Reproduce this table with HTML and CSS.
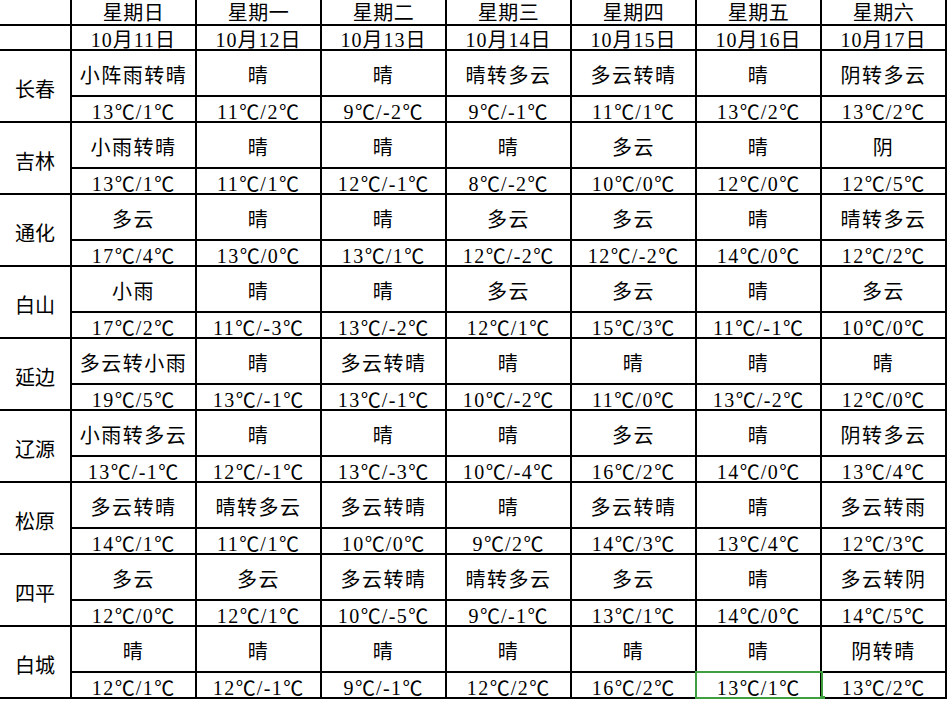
FILE: index.html
```html
<!DOCTYPE html>
<html lang="zh">
<head>
<meta charset="utf-8">
<title>吉林天气预报</title>
<link rel="stylesheet" href="styles.css">
</head>
<body>
<div class="sheet">
  <div class="c corner"></div>
  <div class="c hd">星期日</div><div class="c hd">星期一</div><div class="c hd">星期二</div><div class="c hd">星期三</div><div class="c hd">星期四</div><div class="c hd">星期五</div><div class="c hd">星期六</div>
  <div class="c corner"></div>
  <div class="c dt">10月11日</div><div class="c dt">10月12日</div><div class="c dt">10月13日</div><div class="c dt">10月14日</div><div class="c dt">10月15日</div><div class="c dt">10月16日</div><div class="c dt">10月17日</div>

  <div class="c city">长春</div>
  <div class="c wx">小阵雨转晴</div><div class="c wx">晴</div><div class="c wx">晴</div><div class="c wx">晴转多云</div><div class="c wx">多云转晴</div><div class="c wx">晴</div><div class="c wx">阴转多云</div>
  <div class="c tp">13<span class="u">℃</span>/1<span class="u">℃</span></div><div class="c tp">11<span class="u">℃</span>/2<span class="u">℃</span></div><div class="c tp">9<span class="u">℃</span>/-2<span class="u">℃</span></div><div class="c tp">9<span class="u">℃</span>/-1<span class="u">℃</span></div><div class="c tp">11<span class="u">℃</span>/1<span class="u">℃</span></div><div class="c tp">13<span class="u">℃</span>/2<span class="u">℃</span></div><div class="c tp">13<span class="u">℃</span>/2<span class="u">℃</span></div>

  <div class="c city">吉林</div>
  <div class="c wx">小雨转晴</div><div class="c wx">晴</div><div class="c wx">晴</div><div class="c wx">晴</div><div class="c wx">多云</div><div class="c wx">晴</div><div class="c wx">阴</div>
  <div class="c tp">13<span class="u">℃</span>/1<span class="u">℃</span></div><div class="c tp">11<span class="u">℃</span>/1<span class="u">℃</span></div><div class="c tp">12<span class="u">℃</span>/-1<span class="u">℃</span></div><div class="c tp">8<span class="u">℃</span>/-2<span class="u">℃</span></div><div class="c tp">10<span class="u">℃</span>/0<span class="u">℃</span></div><div class="c tp">12<span class="u">℃</span>/0<span class="u">℃</span></div><div class="c tp">12<span class="u">℃</span>/5<span class="u">℃</span></div>

  <div class="c city">通化</div>
  <div class="c wx">多云</div><div class="c wx">晴</div><div class="c wx">晴</div><div class="c wx">多云</div><div class="c wx">多云</div><div class="c wx">晴</div><div class="c wx">晴转多云</div>
  <div class="c tp">17<span class="u">℃</span>/4<span class="u">℃</span></div><div class="c tp">13<span class="u">℃</span>/0<span class="u">℃</span></div><div class="c tp">13<span class="u">℃</span>/1<span class="u">℃</span></div><div class="c tp">12<span class="u">℃</span>/-2<span class="u">℃</span></div><div class="c tp">12<span class="u">℃</span>/-2<span class="u">℃</span></div><div class="c tp">14<span class="u">℃</span>/0<span class="u">℃</span></div><div class="c tp">12<span class="u">℃</span>/2<span class="u">℃</span></div>

  <div class="c city">白山</div>
  <div class="c wx">小雨</div><div class="c wx">晴</div><div class="c wx">晴</div><div class="c wx">多云</div><div class="c wx">多云</div><div class="c wx">晴</div><div class="c wx">多云</div>
  <div class="c tp">17<span class="u">℃</span>/2<span class="u">℃</span></div><div class="c tp">11<span class="u">℃</span>/-3<span class="u">℃</span></div><div class="c tp">13<span class="u">℃</span>/-2<span class="u">℃</span></div><div class="c tp">12<span class="u">℃</span>/1<span class="u">℃</span></div><div class="c tp">15<span class="u">℃</span>/3<span class="u">℃</span></div><div class="c tp">11<span class="u">℃</span>/-1<span class="u">℃</span></div><div class="c tp">10<span class="u">℃</span>/0<span class="u">℃</span></div>

  <div class="c city">延边</div>
  <div class="c wx">多云转小雨</div><div class="c wx">晴</div><div class="c wx">多云转晴</div><div class="c wx">晴</div><div class="c wx">晴</div><div class="c wx">晴</div><div class="c wx">晴</div>
  <div class="c tp">19<span class="u">℃</span>/5<span class="u">℃</span></div><div class="c tp">13<span class="u">℃</span>/-1<span class="u">℃</span></div><div class="c tp">13<span class="u">℃</span>/-1<span class="u">℃</span></div><div class="c tp">10<span class="u">℃</span>/-2<span class="u">℃</span></div><div class="c tp">11<span class="u">℃</span>/0<span class="u">℃</span></div><div class="c tp">13<span class="u">℃</span>/-2<span class="u">℃</span></div><div class="c tp">12<span class="u">℃</span>/0<span class="u">℃</span></div>

  <div class="c city">辽源</div>
  <div class="c wx">小雨转多云</div><div class="c wx">晴</div><div class="c wx">晴</div><div class="c wx">晴</div><div class="c wx">多云</div><div class="c wx">晴</div><div class="c wx">阴转多云</div>
  <div class="c tp">13<span class="u">℃</span>/-1<span class="u">℃</span></div><div class="c tp">12<span class="u">℃</span>/-1<span class="u">℃</span></div><div class="c tp">13<span class="u">℃</span>/-3<span class="u">℃</span></div><div class="c tp">10<span class="u">℃</span>/-4<span class="u">℃</span></div><div class="c tp">16<span class="u">℃</span>/2<span class="u">℃</span></div><div class="c tp">14<span class="u">℃</span>/0<span class="u">℃</span></div><div class="c tp">13<span class="u">℃</span>/4<span class="u">℃</span></div>

  <div class="c city">松原</div>
  <div class="c wx">多云转晴</div><div class="c wx">晴转多云</div><div class="c wx">多云转晴</div><div class="c wx">晴</div><div class="c wx">多云转晴</div><div class="c wx">晴</div><div class="c wx">多云转雨</div>
  <div class="c tp">14<span class="u">℃</span>/1<span class="u">℃</span></div><div class="c tp">11<span class="u">℃</span>/1<span class="u">℃</span></div><div class="c tp">10<span class="u">℃</span>/0<span class="u">℃</span></div><div class="c tp">9<span class="u">℃</span>/2<span class="u">℃</span></div><div class="c tp">14<span class="u">℃</span>/3<span class="u">℃</span></div><div class="c tp">13<span class="u">℃</span>/4<span class="u">℃</span></div><div class="c tp">12<span class="u">℃</span>/3<span class="u">℃</span></div>

  <div class="c city">四平</div>
  <div class="c wx">多云</div><div class="c wx">多云</div><div class="c wx">多云转晴</div><div class="c wx">晴转多云</div><div class="c wx">多云</div><div class="c wx">晴</div><div class="c wx">多云转阴</div>
  <div class="c tp">12<span class="u">℃</span>/0<span class="u">℃</span></div><div class="c tp">12<span class="u">℃</span>/1<span class="u">℃</span></div><div class="c tp">10<span class="u">℃</span>/-5<span class="u">℃</span></div><div class="c tp">9<span class="u">℃</span>/-1<span class="u">℃</span></div><div class="c tp">13<span class="u">℃</span>/1<span class="u">℃</span></div><div class="c tp">14<span class="u">℃</span>/0<span class="u">℃</span></div><div class="c tp">14<span class="u">℃</span>/5<span class="u">℃</span></div>

  <div class="c city">白城</div>
  <div class="c wx">晴</div><div class="c wx">晴</div><div class="c wx">晴</div><div class="c wx">晴</div><div class="c wx">晴</div><div class="c wx">晴</div><div class="c wx">阴转晴</div>
  <div class="c tp">12<span class="u">℃</span>/1<span class="u">℃</span></div><div class="c tp">12<span class="u">℃</span>/-1<span class="u">℃</span></div><div class="c tp">9<span class="u">℃</span>/-1<span class="u">℃</span></div><div class="c tp">12<span class="u">℃</span>/2<span class="u">℃</span></div><div class="c tp">16<span class="u">℃</span>/2<span class="u">℃</span></div><div class="c tp sel">13<span class="u">℃</span>/1<span class="u">℃</span></div><div class="c tp">13<span class="u">℃</span>/2<span class="u">℃</span></div>
</div>
</body>
</html>
```

FILE: styles.css
```css
html, body {
  margin: 0;
  padding: 0;
  background: #ffffff;
}

body {
  font-family: "Liberation Serif", "Noto Sans CJK SC", serif;
  color: #000000;
}

.sheet {
  display: inline-grid;
  grid-template-columns: 70px repeat(7, 123px);
  grid-template-rows: 24px 23px repeat(9, 44px 24px);
  gap: 2px;
  padding: 0 2px 2px 0;
  background: #000000;
}

.c {
  background: #ffffff;
  display: flex;
  align-items: center;
  justify-content: center;
  font-size: 20px;
  line-height: 18px;
  white-space: nowrap;
  min-height: 0;
}

.hd {
  letter-spacing: 0.5px;
  padding-top: 2px;
}

.dt {
  letter-spacing: 1px;
  padding-top: 4px;
}

.city {
  grid-row: span 2;
  padding-top: 8px;
}

.wx {
  letter-spacing: 1.5px;
  padding-top: 6px;
}

.tp {
  letter-spacing: 1.5px;
  padding-top: 5px;
}

.u {
  font-family: "Noto Sans CJK SC", sans-serif;
  letter-spacing: 0;
  margin-right: 1px;
}

.sel {
  position: relative;
  z-index: 2;
}

.sel::after {
  content: "";
  position: absolute;
  left: -2px;
  top: -2px;
  right: -3px;
  bottom: -2px;
  border: 2px solid #3f9f3f;
}

.sel::before {
  content: "";
  position: absolute;
  right: -5px;
  bottom: -4px;
  width: 5px;
  height: 5px;
  background: #3f9f3f;
  z-index: 1;
}
```
